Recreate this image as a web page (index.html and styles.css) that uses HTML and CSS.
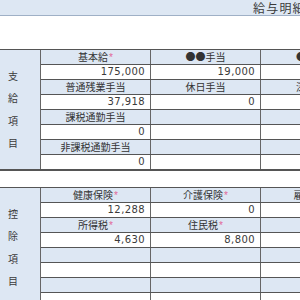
FILE: index.html
```html
<!DOCTYPE html>
<html lang="ja">
<head>
<meta charset="utf-8">
<link rel="stylesheet" href="styles.css">
</head>
<body>
<div class="titlebar"><span class="title">給与明細書</span></div>
<div class="spacer"></div>

<div class="section">
  <div class="side"><span>支</span><span>給</span><span>項</span><span>目</span></div>
  <div class="rows">
    <div class="row head"><div class="cell">基本給<i class="req">*</i></div><div class="cell">●●手当</div><div class="cell">●●手当</div></div>
    <div class="row val"><div class="cell">175,000</div><div class="cell">19,000</div><div class="cell"></div></div>
    <div class="row head"><div class="cell">普通残業手当</div><div class="cell">休日手当</div><div class="cell">深夜手当</div></div>
    <div class="row val"><div class="cell">37,918</div><div class="cell">0</div><div class="cell"></div></div>
    <div class="row head"><div class="cell">課税通勤手当</div><div class="cell"></div><div class="cell"></div></div>
    <div class="row val"><div class="cell">0</div><div class="cell"></div><div class="cell"></div></div>
    <div class="row head"><div class="cell">非課税通勤手当</div><div class="cell"></div><div class="cell"></div></div>
    <div class="row val"><div class="cell">0</div><div class="cell"></div><div class="cell"></div></div>
  </div>
</div>

<div class="gap"></div>

<div class="section">
  <div class="side"><span>控</span><span>除</span><span>項</span><span>目</span></div>
  <div class="rows">
    <div class="row head"><div class="cell">健康保険<i class="req">*</i></div><div class="cell">介護保険<i class="req">*</i></div><div class="cell">雇用保険<i class="req">*</i></div></div>
    <div class="row val"><div class="cell">12,288</div><div class="cell">0</div><div class="cell"></div></div>
    <div class="row head"><div class="cell">所得税<i class="req">*</i></div><div class="cell">住民税<i class="req">*</i></div><div class="cell"></div></div>
    <div class="row val"><div class="cell">4,630</div><div class="cell">8,800</div><div class="cell"></div></div>
    <div class="row head"><div class="cell"></div><div class="cell"></div><div class="cell"></div></div>
    <div class="row val"><div class="cell"></div><div class="cell"></div><div class="cell"></div></div>
    <div class="row head"><div class="cell"></div><div class="cell"></div><div class="cell"></div></div>
    <div class="row val"><div class="cell"></div><div class="cell"></div><div class="cell"></div></div>
  </div>
</div>
</body>
</html>
```
FILE: styles.css
```css
html, body {
  margin: 0;
  padding: 0;
  background: #ffffff;
  overflow: hidden;
}
body {
  width: 300px;
  height: 300px;
  font-family: "Noto Sans CJK JP", "Liberation Sans", sans-serif;
  color: #333333;
}
.titlebar {
  height: 15px;
  background: #dde7f3;
  border-bottom: 1px solid #9fb0c6;
  white-space: nowrap;
  overflow: hidden;
}
.title {
  display: block;
  padding-left: 253px;
  font-size: 12px;
  line-height: 15px;
  letter-spacing: 1.2px;
  color: #3a3a3a;
}
.spacer {
  height: 33px;
}
.gap {
  height: 16px;
}
.section {
  display: flex;
  border-top: 1px solid #555555;
  border-bottom: 2px solid #555555;
  width: 400px;
}
.side {
  width: 41px;
  flex: none;
  background: #dde7f3;
  border-right: 1px solid #666666;
  display: flex;
  flex-direction: column;
  justify-content: center;
  padding-left: 8px;
  box-sizing: border-box;
}
.side span {
  font-size: 10px;
  line-height: 22.5px;
  height: 22.5px;
  color: #3a3a3a;
}
.rows {
  flex: none;
  display: flex;
  flex-direction: column;
}
.row {
  display: grid;
  grid-template-columns: 110px 110px 111px;
  height: 14px;
}
.row:not(:last-child) {
  border-bottom: 1px solid #555555;
}
.cell {
  border-right: 1px solid #666666;
  white-space: nowrap;
  overflow: hidden;
}
.head .cell {
  background: #dde7f3;
  text-align: center;
  font-size: 10px;
  line-height: 14px;
}
.val .cell {
  background: #ffffff;
  text-align: right;
  padding-right: 5px;
  font-family: "DejaVu Sans", "Liberation Sans", sans-serif;
  font-size: 10px;
  line-height: 14px;
  letter-spacing: 0.4px;
  color: #3a3a3a;
}
.req {
  font-style: normal;
  font-family: "Liberation Sans", sans-serif;
  color: #e2679a;
  font-size: 10px;
  line-height: 10px;
  margin-left: 1px;
}
```
